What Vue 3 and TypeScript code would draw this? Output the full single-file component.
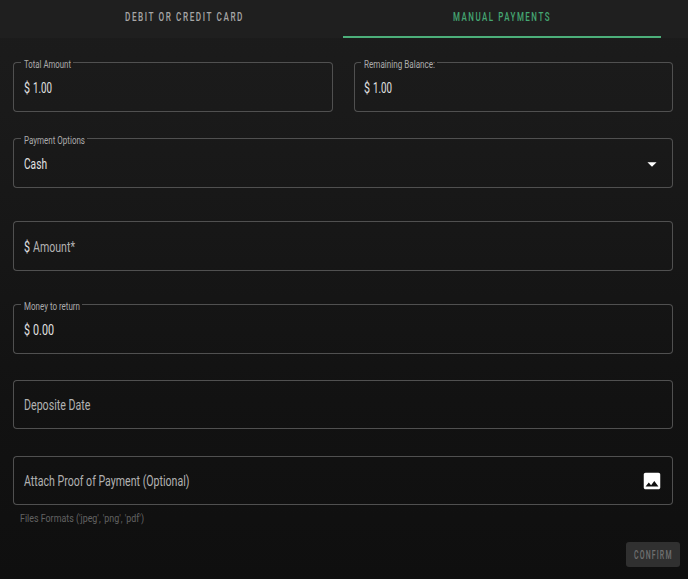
<script setup lang="ts">
interface Field {
  id: string
  label?: string
  labelWidth?: number
  prefix?: boolean
  value: string
  valueWidth: number
  muted?: boolean
  icon?: 'caret' | 'image'
}

const tabs = [
  { name: 'DEBIT OR CREDIT CARD', width: 119, active: false },
  { name: 'MANUAL PAYMENTS', width: 98, active: true },
]

const fields: Field[] = [
  { id: 'total', label: 'Total Amount', labelWidth: 47, prefix: true, value: '1.00', valueWidth: 19 },
  { id: 'remaining', label: 'Remaining Balance:', labelWidth: 71, prefix: true, value: '1.00', valueWidth: 19 },
  { id: 'options', label: 'Payment Options', labelWidth: 61, value: 'Cash', valueWidth: 23, icon: 'caret' },
  { id: 'amount', prefix: true, value: 'Amount*', valueWidth: 42, muted: true },
  { id: 'return', label: 'Money to return', labelWidth: 56, prefix: true, value: '0.00', valueWidth: 21 },
  { id: 'date', value: 'Deposite Date', valueWidth: 66.5, muted: true },
  { id: 'proof', value: 'Attach Proof of Payment (Optional)', valueWidth: 165.5, muted: true, icon: 'image' },
]
</script>

<template>
  <main class="payment">
    <nav class="tabs">
      <div v-for="tab in tabs" :key="tab.name" class="tab" :class="{ active: tab.active }">
        <svg class="tab-text" :width="tab.width" height="18">
          <text x="0" y="14" :textLength="tab.width" lengthAdjust="spacingAndGlyphs">{{ tab.name }}</text>
        </svg>
      </div>
    </nav>

    <form class="fields" @submit.prevent>
      <div v-for="field in fields" :key="field.id" class="field" :class="field.id">
        <div class="edge">
          <span class="edge-start"></span>
          <span v-if="field.label" class="notch">
            <svg class="label" :width="field.labelWidth" height="14">
              <text x="0" y="10" :textLength="field.labelWidth" lengthAdjust="spacingAndGlyphs">{{ field.label }}</text>
            </svg>
          </span>
          <span class="edge-end"></span>
        </div>
        <div class="content">
          <svg v-if="field.prefix" class="value prefix" width="6" height="20">
            <text x="0" y="15" textLength="6" lengthAdjust="spacingAndGlyphs">$</text>
          </svg>
          <svg class="value" :class="{ muted: field.muted }" :width="field.valueWidth" height="20">
            <text x="0" y="15" :textLength="field.valueWidth" lengthAdjust="spacingAndGlyphs">{{ field.value }}</text>
          </svg>
          <svg v-if="field.icon === 'caret'" class="icon" width="22" height="22" viewBox="0 0 24 24">
            <path d="M7 10l5 5 5-5z" />
          </svg>
          <svg v-if="field.icon === 'image'" class="icon" width="22" height="22" viewBox="0 0 24 24">
            <path d="M21 19V5c0-1.1-.9-2-2-2H5c-1.1 0-2 .9-2 2v14c0 1.1.9 2 2 2h14c1.1 0 2-.9 2-2zM8.500 13.500l2.500 3.010L14.500 12l4.500 6H5l3.500-4.500z" />
          </svg>
        </div>
      </div>
    </form>

    <svg class="hint" width="124" height="18">
      <text x="0" y="13" textLength="124" lengthAdjust="spacingAndGlyphs">Files Formats ('jpeg', 'png', 'pdf')</text>
    </svg>

    <footer class="actions">
      <button class="confirm" type="button" disabled>
        <svg width="38" height="16">
          <text x="0" y="12" transform="scale(0.58 1)">CONFIRM</text>
        </svg>
      </button>
    </footer>
  </main>
</template>

<style>
body {
  background: #101010;
}
</style>

<style scoped>
.payment {
  box-sizing: border-box;
  height: 579px;
  overflow: hidden;
  background: linear-gradient(#1c1c1c 0, #1a1a1a 110px, #171717 230px, #121212 400px, #0f0f0f 579px);
  font-family: Roboto, "Liberation Sans", sans-serif;
}
svg {
  display: block;
  flex: none;
  overflow: visible;
}
.tabs {
  display: grid;
  grid-template-columns: 318px 318px;
  justify-content: center;
  box-sizing: border-box;
  height: 38px;
  padding-right: 2px;
  background: #1f1f1f;
}
.tab {
  display: flex;
  justify-content: center;
  box-sizing: border-box;
  padding-top: 7px;
  border-bottom: 2px solid transparent;
}
.tab-text {
  fill: #a6a6a6;
  font-size: 13px;
  font-weight: 500;
  letter-spacing: 2.5px;
}
.active {
  border-color: #4caf7a;
}
.active .tab-text {
  fill: #45a773;
}
.fields {
  display: grid;
  grid-template-columns: 320px 319px;
  grid-template-rows: 50px 76px 83px 83px 75px 76px;
  column-gap: 21px;
  padding: 24px 0 0 13px;
}
.field {
  grid-column: 1 / -1;
  display: grid;
  grid-template: 100% / 100%;
}
.total {
  grid-column: 1;
}
.remaining {
  grid-column: 2;
}
.options {
  margin-top: 26px;
}
.amount,
.return {
  margin-top: 33px;
}
.date {
  margin-top: 26px;
}
.proof {
  margin-top: 27px;
}
.edge,
.content {
  grid-area: 1 / 1;
}
.edge {
  display: flex;
}
.edge-start {
  box-sizing: border-box;
  width: 8px;
  border: 1px solid #505050;
  border-right: 0;
  border-radius: 4px 0 0 4px;
}
.edge-end {
  box-sizing: border-box;
  flex: 1;
  border: 1px solid #505050;
  border-left: 0;
  border-radius: 0 4px 4px 0;
}
.notch {
  box-sizing: border-box;
  padding: 0 2px 0 3px;
  border-bottom: 1px solid #505050;
}
.label {
  margin-top: -4px;
  fill: #acacac;
  font-size: 10px;
}
.content {
  display: flex;
  align-items: center;
  padding: 2px 10px 0 11px;
}
.date .content,
.proof .content {
  padding-top: 0;
}
.remaining .edge-start {
  width: 7px;
}
.remaining .content {
  padding-left: 10px;
}
.value {
  fill: #e2e2e2;
  font-size: 14.5px;
}
.prefix {
  margin-right: 3px;
}
.muted {
  fill: #b2b2b2;
}
.icon {
  margin-left: auto;
  fill: #fff;
}
.hint {
  margin: 4px 0 0 20px;
  fill: #626262;
  font-size: 11.5px;
}
.actions {
  display: flex;
  justify-content: flex-end;
  padding: 15px 8px 0 0;
}
.confirm {
  display: flex;
  align-items: center;
  justify-content: center;
  width: 54px;
  height: 25px;
  padding: 0;
  border: 0;
  border-radius: 3px;
  background: #303030;
}
.confirm svg {
  fill: #707070;
  font: 500 12px Roboto, sans-serif;
  letter-spacing: 2px;
}
</style>
